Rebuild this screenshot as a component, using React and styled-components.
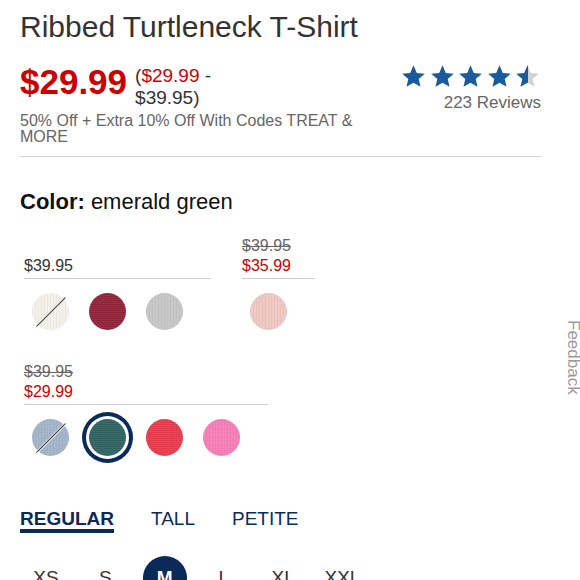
import React from "react";
import styled, { createGlobalStyle, css } from "styled-components";

const GlobalStyle = createGlobalStyle`
  html, body { margin: 0; padding: 0; background: #fff; }
  body { font-family: "Liberation Sans", Arial, Helvetica, sans-serif; color: #333; }
  * { box-sizing: border-box; }
`;

const NAVY = "#0c2a58";
const RED = "#cc0000";

const Page = styled.div`
  position: relative;
  width: 580px;
  height: 580px;
  overflow: hidden;
  padding: 10px 39px 0 20px;
`;

const Title = styled.h1`
  margin: 0;
  font-weight: normal;
  font-size: 30px;
  line-height: 34px;
  color: #333;
`;

const PriceRow = styled.div`
  display: flex;
  justify-content: space-between;
  align-items: flex-start;
  margin-top: 19px;
`;

const LeftCol = styled.div`
  width: 360px;
`;

const PriceLine = styled.div`
  display: flex;
  align-items: flex-start;
  gap: 8px;
`;

const BigPrice = styled.div`
  font-size: 35px;
  line-height: 38px;
  font-weight: bold;
  color: ${RED};
`;

const Range = styled.div`
  width: 92px;
  margin-top: 2px;
  font-size: 19px;
  line-height: 22px;
  color: #333;
`;

const Red = styled.span`
  color: ${RED};
`;

const Promo = styled.div`
  margin-top: 4px;
  font-size: 16px;
  line-height: 16px;
  color: #666;
`;

const Rating = styled.div`
  display: flex;
  flex-direction: column;
  align-items: flex-end;
`;

const Stars = styled.div`
  display: flex;
  gap: 1.5px;
`;

const Reviews = styled.div`
  margin-top: 3px;
  font-size: 17px;
  line-height: 20px;
  color: #666;
`;

const Divider = styled.hr`
  margin: 11px 0 0;
  border: 0;
  border-top: 1px solid #d4d4d4;
  height: 0;
`;

const ColorLabel = styled.div`
  margin-top: 33px;
  font-size: 22px;
  line-height: 24px;
  color: #111;
  strong { font-weight: bold; }
`;

const Groups = styled.div`
  display: flex;
  flex-wrap: wrap;
  column-gap: 31px;
  row-gap: 32px;
  margin-top: 22px;
  padding-left: 4px;
`;

const Group = styled.div`
  display: flex;
  flex-direction: column;
`;

const GroupHeader = styled.div`
  height: 43px;
  display: flex;
  flex-direction: column;
  justify-content: flex-end;
  padding-bottom: 2px;
  border-bottom: 1px solid #cfcfcf;
`;

const PriceText = styled.div`
  font-size: 16px;
  line-height: 20px;
  white-space: nowrap;
  color: ${(p) => (p.$kind === "sale" ? RED : p.$kind === "strike" ? "#666" : "#333")};
  text-decoration: ${(p) => (p.$kind === "strike" ? "line-through" : "none")};
`;

const SwatchRow = styled.div`
  display: flex;
  padding-top: 14px;
  padding-right: 16px;
`;

const SwatchCell = styled.div`
  width: 57px;
  padding-left: 8px;
  flex-shrink: 0;
`;

const Swatch = styled.span`
  position: relative;
  display: block;
  width: 37px;
  height: 37px;
  border-radius: 50%;
  background-color: ${(p) => p.$color};
  background-image: repeating-linear-gradient(
      0deg,
      rgba(255, 255, 255, 0.07) 0 1px,
      transparent 1px 2px
    ),
    repeating-linear-gradient(90deg, rgba(0, 0, 0, 0.04) 0 1px, transparent 1px 3px);
  ${(p) =>
    p.$selected &&
    css`
      box-shadow: 0 0 0 3px #fff, 0 0 0 7px ${NAVY};
    `}
  ${(p) =>
    p.$slashed &&
    css`
      &::after {
        content: "";
        position: absolute;
        left: 50%;
        top: 50%;
        width: 1px;
        height: 41px;
        background: #2a2a2a;
        box-shadow: ${p.$slashLight ? "1px 0 0 rgba(255,255,255,0.9), -1px 0 0 rgba(255,255,255,0.6)" : "none"};
        transform: translate(-50%, -50%) rotate(45deg);
      }
    `}
`;

const Tabs = styled.div`
  display: flex;
  gap: 37px;
  margin-top: 52px;
`;

const Tab = styled.div`
  font-size: 19px;
  line-height: 21px;
  color: ${NAVY};
  font-weight: ${(p) => (p.$active ? "bold" : "normal")};
  border-bottom: 4px solid ${(p) => (p.$active ? NAVY : "transparent")};
`;

const Sizes = styled.div`
  display: flex;
  gap: 15.3px;
  margin-top: 23px;
  padding-left: 4px;
`;

const SizeOption = styled.div`
  width: 44px;
  height: 44px;
  border-radius: 50%;
  display: flex;
  align-items: center;
  justify-content: center;
  flex-shrink: 0;
  font-size: 19px;
  color: ${(p) => (p.$selected ? "#fff" : "#333")};
  background: ${(p) => (p.$selected ? NAVY : "transparent")};
  font-weight: ${(p) => (p.$selected ? "bold" : "normal")};
`;

const Feedback = styled.div`
  position: absolute;
  right: -2px;
  top: 320px;
  writing-mode: vertical-rl;
  font-size: 17px;
  line-height: 17px;
  color: #9a9a9a;
`;

const STAR = "M12 2l2.94 6.9 7.06.6-5.36 4.66 1.6 7.04L12 17.47 5.76 21.2l1.6-7.04L2 9.5l7.06-.6z";

function Star({ half }) {
  return (
    <svg width="27" height="27" viewBox="0 0 24 24">
      {half && (
        <defs>
          <linearGradient id="halfStar" x1="0" x2="1" y1="0" y2="0">
            <stop offset="52%" stopColor="#1a5b9c" />
            <stop offset="52%" stopColor="#d3d3d3" />
          </linearGradient>
        </defs>
      )}
      <path d={STAR} fill={half ? "url(#halfStar)" : "#1a5b9c"} />
    </svg>
  );
}

const groups = [
  {
    prices: [{ kind: "regular", text: "$39.95" }],
    swatches: [
      { color: "#f4f0ea", slashed: true },
      { color: "#8f2338" },
      { color: "#c6c6c6" },
    ],
  },
  {
    prices: [
      { kind: "strike", text: "$39.95" },
      { kind: "sale", text: "$35.99" },
    ],
    swatches: [{ color: "#eec8c3" }],
  },
  {
    prices: [
      { kind: "strike", text: "$39.95" },
      { kind: "sale", text: "$29.99" },
    ],
    swatches: [
      { color: "#a3b4c8", slashed: true, slashLight: true },
      { color: "#2f6260", selected: true },
      { color: "#e63b4c" },
      { color: "#f47eb6" },
    ],
  },
];

const sizes = ["XS", "S", "M", "L", "XL", "XXL"];

export default function App() {
  return (
    <>
      <GlobalStyle />
      <Page>
        <Title>Ribbed Turtleneck T-Shirt</Title>
        <PriceRow>
          <LeftCol>
            <PriceLine>
              <BigPrice>$29.99</BigPrice>
              <Range>
                (<Red>$29.99</Red> - $39.95)
              </Range>
            </PriceLine>
            <Promo>50% Off + Extra 10% Off With Codes TREAT &amp; MORE</Promo>
          </LeftCol>
          <Rating>
            <Stars>
              <Star />
              <Star />
              <Star />
              <Star />
              <Star half />
            </Stars>
            <Reviews>223 Reviews</Reviews>
          </Rating>
        </PriceRow>
        <Divider />
        <ColorLabel>
          <strong>Color:</strong> emerald green
        </ColorLabel>
        <Groups>
          {groups.map((g, gi) => (
            <Group key={gi}>
              <GroupHeader>
                {g.prices.map((p, pi) => (
                  <PriceText key={pi} $kind={p.kind}>
                    {p.text}
                  </PriceText>
                ))}
              </GroupHeader>
              <SwatchRow>
                {g.swatches.map((s, si) => (
                  <SwatchCell key={si}>
                    <Swatch
                      $color={s.color}
                      $slashed={s.slashed}
                      $slashLight={s.slashLight}
                      $selected={s.selected}
                    />
                  </SwatchCell>
                ))}
              </SwatchRow>
            </Group>
          ))}
        </Groups>
        <Tabs>
          <Tab $active>REGULAR</Tab>
          <Tab>TALL</Tab>
          <Tab>PETITE</Tab>
        </Tabs>
        <Sizes>
          {sizes.map((s) => (
            <SizeOption key={s} $selected={s === "M"}>
              {s}
            </SizeOption>
          ))}
        </Sizes>
        <Feedback>Feedback</Feedback>
      </Page>
    </>
  );
}
